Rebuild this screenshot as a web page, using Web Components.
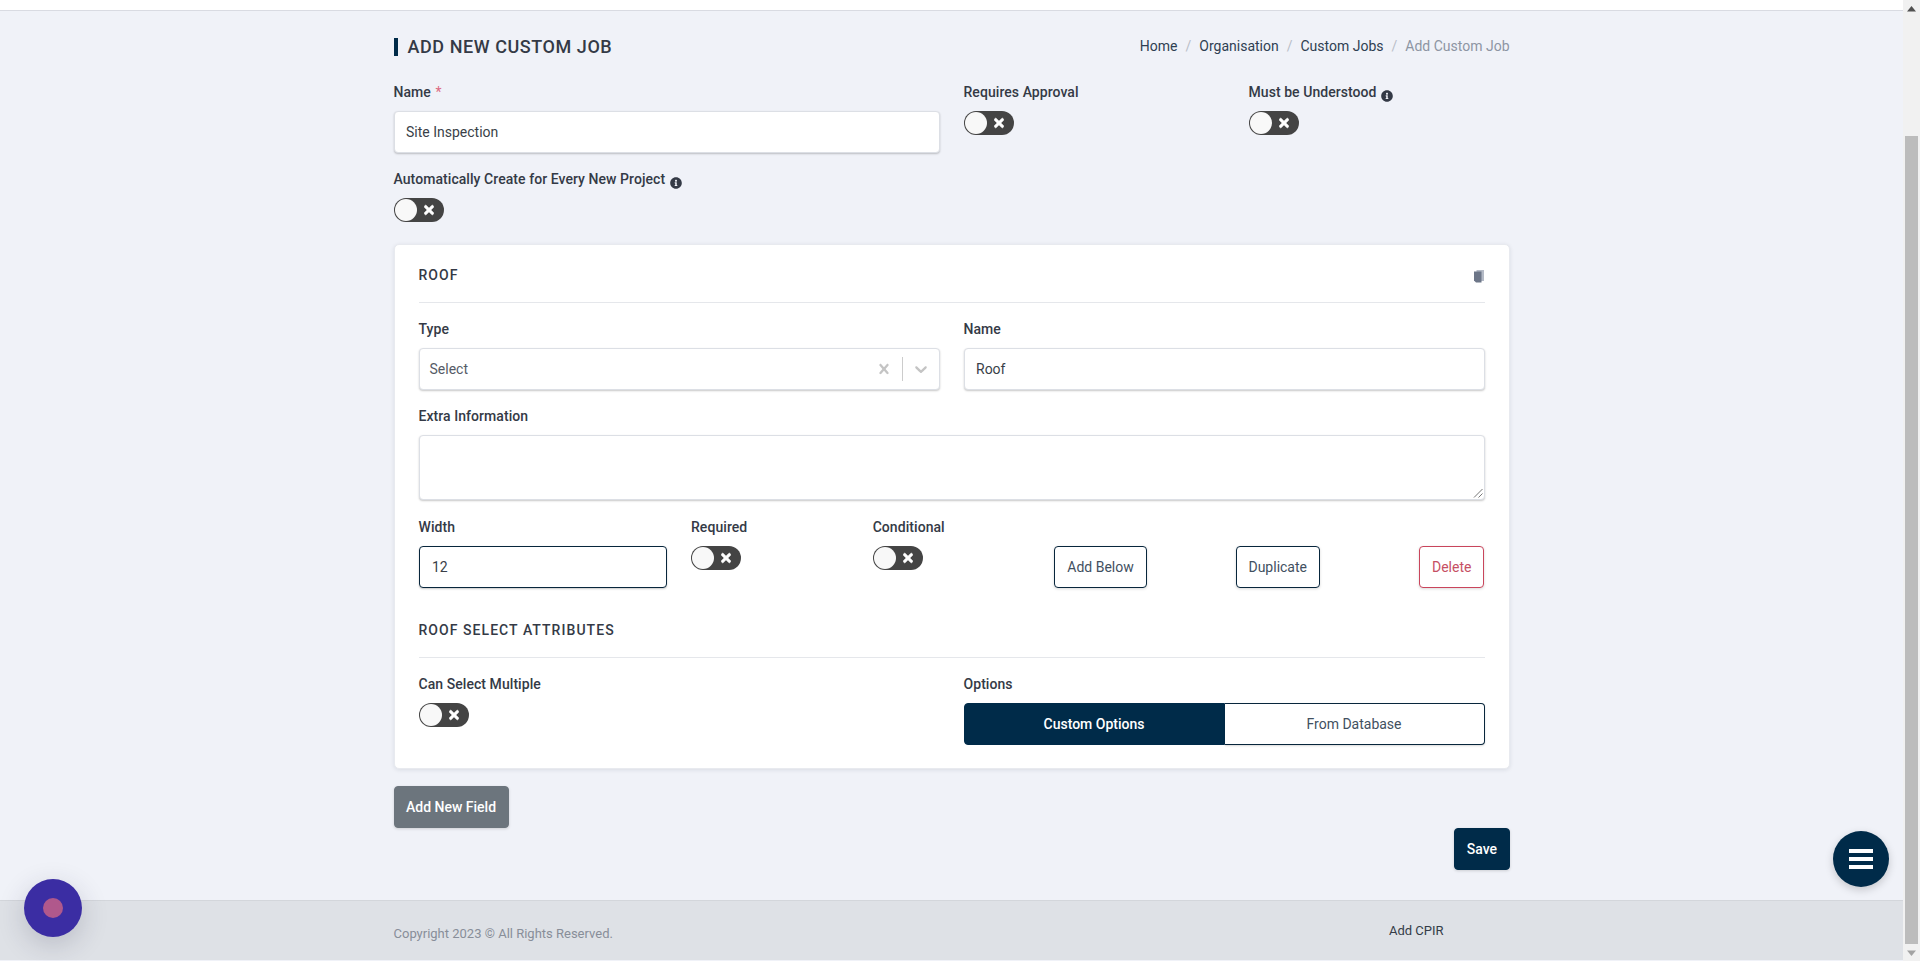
<!DOCTYPE html>
<html lang="en"><head><meta charset="utf-8"><title>Add New Custom Job</title>
<style>
html,body{margin:0;padding:0;height:961px;overflow:hidden;background:#f0f2f8;font-family:Roboto,"Liberation Sans",sans-serif;font-size:14px;color:#343a46}
</style></head><body>
<x-app>
  <x-topbar></x-topbar>
  <x-content>
    <x-page-head heading="ADD NEW CUSTOM JOB">
      <x-crumb href>Home</x-crumb><x-crumb href>Organisation</x-crumb><x-crumb href>Custom Jobs</x-crumb><x-crumb>Add Custom Job</x-crumb>
    </x-page-head>
    <x-row>
      <x-col span="6"><x-field label="Name" required after="15.5"><x-input value="Site Inspection"></x-input></x-field></x-col>
      <x-col span="3"><x-field label="Requires Approval"><x-toggle></x-toggle></x-field></x-col>
      <x-col span="3"><x-field label="Must be Understood" info><x-toggle></x-toggle></x-field></x-col>
      <x-col span="12"><x-field label="Automatically Create for Every New Project" info after="22"><x-toggle></x-toggle></x-field></x-col>
    </x-row>
    <x-card>
      <x-section heading="ROOF" copy></x-section>
      <x-row>
        <x-col span="6"><x-field label="Type" after="15.5"><x-select placeholder="Select"></x-select></x-field></x-col>
        <x-col span="6"><x-field label="Name" after="15.5"><x-input value="Roof"></x-input></x-field></x-col>
        <x-col span="12"><x-field label="Extra Information" gap="8.5" after="16.5"><x-textarea></x-textarea></x-field></x-col>
        <x-col span="3"><x-field label="Width"><x-input value="12" focused pad="12.5"></x-input></x-field></x-col>
        <x-col span="2"><x-field label="Required"><x-toggle></x-toggle></x-field></x-col>
        <x-col span="2"><x-field label="Conditional"><x-toggle></x-toggle></x-field></x-col>
        <x-col span="2"><x-field><x-btn variant="outline">Add Below</x-btn></x-field></x-col>
        <x-col span="2"><x-field><x-btn variant="outline" pad="11.5">Duplicate</x-btn></x-field></x-col>
        <x-col span="1" end><x-field><x-btn variant="danger">Delete</x-btn></x-field></x-col>
      </x-row>
      <x-section heading="ROOF SELECT ATTRIBUTES" before="31.5"></x-section>
      <x-row>
        <x-col span="6"><x-field label="Can Select Multiple"><x-toggle></x-toggle></x-field></x-col>
        <x-col span="6"><x-field label="Options"><x-segmented active="Custom Options" other="From Database"></x-segmented></x-field></x-col>
      </x-row>
    </x-card>
    <x-actions>
      <x-btn variant="grey" pad="11.5">Add New Field</x-btn>
      <x-btn variant="primary" pad="11.5" slot="end">Save</x-btn>
    </x-actions>
  </x-content>
  <x-footer copyright="Copyright 2023 © All Rights Reserved." link="Add CPIR"></x-footer>
  <x-scrollbar></x-scrollbar>
  <x-chat-badge></x-chat-badge>
  <x-fab></x-fab>
</x-app>
<script>
const ICON={
 info:'<svg viewBox="0 0 512 512" width="12" height="12" fill="currentColor"><path d="M256 8C119.043 8 8 119.083 8 256c0 136.997 111.043 248 248 248s248-111.003 248-248C504 119.083 392.957 8 256 8zm0 110c23.196 0 42 18.804 42 42s-18.804 42-42 42-42-18.804-42-42 18.804-42 42-42zm56 254c0 6.627-5.373 12-12 12h-88c-6.627 0-12-5.373-12-12v-24c0-6.627 5.373-12 12-12h12v-64h-12c-6.627 0-12-5.373-12-12v-24c0-6.627 5.373-12 12-12h64c6.627 0 12 5.373 12 12v100h12c6.627 0 12 5.373 12 12v24z"/></svg>',
 times:'<svg viewBox="0 0 352 512" width="10" height="14" fill="currentColor" stroke="currentColor" stroke-width="24"><path d="M242.72 256l100.07-100.07c12.28-12.28 12.28-32.19 0-44.48l-22.24-22.24c-12.28-12.28-32.19-12.28-44.48 0L176 189.28 75.93 89.21c-12.28-12.28-32.19-12.28-44.48 0L9.21 111.45c-12.28 12.28-12.28 32.19 0 44.48L109.28 256 9.21 356.07c-12.28 12.28-12.28 32.19 0 44.48l22.24 22.24c12.28 12.28 32.2 12.28 44.48 0L176 322.72l100.07 100.07c12.28 12.28 32.2 12.28 44.48 0l22.24-22.24c12.28-12.28 12.28-32.19 0-44.48L242.72 256z"/></svg>',
 copy:'<svg viewBox="0 0 10 13" width="10" height="13"><path d="M2.5 0H10v11H2.5z" fill="#b4bac6"/><path d="M0 1.5h7.5V12.5H2L0 10.5z" fill="#6d7688"/></svg>',
 clear:'<svg viewBox="0 0 20 20" width="20" height="20" fill="#c4c4c4"><path d="M14.348 14.849c-0.469 0.469-1.229 0.469-1.697 0l-2.651-3.030-2.651 3.029c-0.469 0.469-1.229 0.469-1.697 0-0.469-0.469-0.469-1.229 0-1.697l2.758-3.15-2.759-3.152c-0.469-0.469-0.469-1.228 0-1.697s1.228-0.469 1.697 0l2.652 3.031 2.651-3.031c0.469-0.469 1.228-0.469 1.697 0s0.469 1.229 0 1.697l-2.758 3.152 2.758 3.15c0.469 0.469 0.469 1.229 0 1.698z"/></svg>',
 chevron:'<svg viewBox="0 0 20 20" width="20" height="20" fill="#c4c4c4"><path d="M4.516 7.548c0.436-0.446 1.043-0.481 1.576 0l3.908 3.747 3.908-3.747c0.533-0.481 1.141-0.446 1.574 0 0.436 0.445 0.408 1.197 0 1.615-0.406 0.418-4.695 4.502-4.695 4.502-0.217 0.223-0.502 0.335-0.787 0.335s-0.57-0.112-0.789-0.335c0 0-4.287-4.084-4.695-4.502s-0.436-1.17 0-1.615z"/></svg>'
};
const NAVY='#08263c';
function el(name,render){
  customElements.define(name,class extends HTMLElement{
    connectedCallback(){
      if(this.shadowRoot)return;
      this.attachShadow({mode:'open'}).innerHTML=render(this);
    }
  });
}
const a=(h,n,d='')=>h.hasAttribute(n)?h.getAttribute(n):d;

el('x-app',()=>`<style>:host{display:block;position:relative;width:1920px;height:961px;overflow:hidden}
.wrap{display:flex;flex-direction:column;width:1903px;height:960px}</style>
<div class="wrap"><slot></slot></div>`);

el('x-topbar',()=>`<style>:host{display:block;flex:none;height:10px;background:#fff;border-bottom:1px solid #d9dbe2}</style>`);

el('x-content',()=>`<style>:host{display:block;flex:1;width:1116px;margin:0 auto;min-height:0}</style><slot></slot>`);

el('x-page-head',h=>`<style>:host{display:flex;justify-content:space-between;align-items:flex-start;height:44.5px;padding-top:26px}
h1{margin:1px 0 0;padding:0 0 0 10px;box-sizing:border-box;border-left:4px solid #002b49;height:18px;display:flex;align-items:center;font:500 18px/18px Roboto,sans-serif;letter-spacing:.56px;color:#343a46}
nav{display:flex;height:19px;align-items:center}</style>
<h1>${a(h,'heading')}</h1><nav><slot></slot></nav>`);

el('x-crumb',h=>`<style>:host{display:inline-flex;font:400 14px/19px Roboto,sans-serif;color:${h.hasAttribute('href')?'#2f3f52':'#8d95a3'}}
.s{color:#b9bec8;padding:0 8px}:host(:first-child) .s{display:none}</style><span class="s">/</span><slot></slot>`);

el('x-row',()=>`<style>:host{display:flex;flex-wrap:wrap;margin:0 -12px}</style><slot></slot>`);

el('x-col',h=>{const s=+a(h,'span','12');return `<style>:host{display:flex;${h.hasAttribute('end')?'justify-content:flex-end;':''}flex:0 0 ${s/12*100}%;width:${s/12*100}%;box-sizing:border-box;padding:0 12px}
</style><slot></slot>`});

el('x-field',h=>{
 const lab=h.getAttribute('label');
 const gap=a(h,'gap','8.5'), after=a(h,'after','0');
 return `<style>:host{display:block;width:100%;margin-bottom:${after}px}
 label{display:block;height:21px;margin-bottom:${gap}px;font:500 14px/21px Roboto,sans-serif;letter-spacing:.06px;color:#343a46;white-space:nowrap}
 .req{color:#dc6a82;font-weight:400;margin-left:1px}
 .i{display:inline-block;vertical-align:-5px;margin-left:4.5px;color:#343a46;line-height:0}
 .box{display:${lab?'block':'flex'};${lab?'':'padding-top:29.5px;'}${h.closest('x-col[end]')?'justify-content:flex-end;':''}}</style>
 ${lab?`<label>${lab}${h.hasAttribute('required')?' <span class="req">*</span>':''}${h.hasAttribute('info')?`<span class="i">${ICON.info}</span>`:''}</label>`:''}
 <div class="box"><slot></slot></div>`});

el('x-input',h=>{const f=h.hasAttribute('focused');return `<style>:host{display:block}
 .i{box-sizing:border-box;height:42px;display:flex;align-items:center;background:#fff;border:1px solid ${f?NAVY:'#dcdfe5'};border-radius:4px;padding:0 ${a(h,'pad','11.5')}px;box-shadow:0 1px 2px rgba(0,0,0,.22);font:400 14px/21px Roboto,sans-serif;color:#3a3f48}</style>
 <div class="i">${a(h,'value')}</div>`});

el('x-textarea',()=>`<style>:host{display:block}
 .i{position:relative;box-sizing:border-box;height:65px;background:#fff;border:1px solid #dcdfe5;border-radius:4px;box-shadow:0 1px 2px rgba(0,0,0,.22)}
 svg{position:absolute;right:1px;bottom:1px}</style>
 <div class="i"><svg width="11" height="11" viewBox="0 0 11 11" stroke="#777" stroke-width="1" fill="none"><path d="M2 10.5 10.5 2M6.5 10.5 10.5 6.5"/></svg></div>`);

el('x-select',h=>`<style>:host{display:block}
 .i{box-sizing:border-box;height:42px;display:flex;align-items:center;background:#fff;border:1px solid #dcdfe5;border-radius:4px;padding-left:10px;box-shadow:0 1px 2px rgba(0,0,0,.22);font:400 14px/21px Roboto,sans-serif;color:#555b66}
 .t{flex:1}.sep{width:1px;height:24px;background:#ccc;margin:0 8px}.ic{display:flex;line-height:0}.v{margin-right:8px}</style>
 <div class="i"><span class="t">${a(h,'placeholder')}</span><span class="ic c">${ICON.clear}</span><span class="sep"></span><span class="ic v">${ICON.chevron}</span></div>`);

el('x-toggle',()=>`<style>:host{display:block;width:50px;height:24px}
 .t{box-sizing:border-box;width:50px;height:24px;border-radius:12px;background:#444;display:flex;align-items:center;padding:0 10px 0 1px;justify-content:space-between}
 .k{width:22px;height:22px;border-radius:50%;background:#f8f8f8}
 .x{color:#fff;line-height:0;display:flex}</style><div class="t"><span class="k"></span><span class="x">${ICON.times}</span></div>`);

el('x-card',()=>`<style>:host{display:block;box-sizing:border-box;height:525px;background:#fff;border:1px solid #e8eaef;border-radius:5px;padding:19.5px 24px 0;box-shadow:0 1px 4px rgba(20,30,50,.1)}</style><slot></slot>`);

el('x-section',h=>`<style>:host{display:block;margin-top:${a(h,'before','0')}px;margin-bottom:15.5px}
 .r{display:flex;justify-content:space-between;align-items:center;height:21px;margin-bottom:16.5px}
 h2{margin:0;font:500 14px/21px Roboto,sans-serif;letter-spacing:1.05px;color:#343a46}
 .ic{line-height:0;padding:2px 1px 0 0;display:flex}
 hr{margin:0;border:0;height:1px;background:#e5e7eb}</style>
 <div class="r"><h2>${a(h,'heading')}</h2>${h.hasAttribute('copy')?`<span class="ic">${ICON.copy}</span>`:''}</div><hr>`);

el('x-btn',h=>{const v=a(h,'variant','outline');
 const S={outline:`background:#fff;color:#42505f;border:1px solid ${NAVY};font-weight:400`,
 danger:'background:#fff;color:#c64f64;border:1px solid #c9455c;font-weight:400',
 grey:'background:#6c757d;color:#fff;border:1px solid #6c757d;font-weight:500',
 primary:'background:#002b49;color:#fff;border:1px solid #002b49;font-weight:500'}[v];
 return `<style>:host{display:inline-block}
 button{box-sizing:border-box;height:42px;padding:0 ${a(h,'pad','12')}px;border-radius:4px;font-family:Roboto,sans-serif;font-size:14px;line-height:21px;${S};box-shadow:0 1px 3px rgba(0,0,0,.15);white-space:nowrap}</style><button><slot></slot></button>`});

el('x-segmented',h=>`<style>:host{display:flex;height:42px}
 .s{flex:1;box-sizing:border-box;display:flex;align-items:center;justify-content:center;font:400 14px/21px Roboto,sans-serif;border:1px solid ${NAVY}}
 .a{background:#002b49;border-color:#002b49;color:#fff;font-weight:500;border-radius:4px 0 0 4px}
 .b{background:#fff;color:#42505f;border-radius:0 4px 4px 0;border-left:0;box-shadow:0 1px 2px rgba(0,0,0,.15)}</style>
 <div class="s a">${a(h,'active')}</div><div class="s b">${a(h,'other')}</div>`);

el('x-actions',()=>`<style>:host{display:block;padding-top:17px}
 .e{display:flex;justify-content:flex-end}.l{display:flex}</style><div class="l"><slot></slot></div><div class="e"><slot name="end"></slot></div>`);

el('x-footer',h=>`<style>:host{display:block;flex:none;box-sizing:border-box;height:60px;background:#dee1e6;border-top:1px solid #d3d6db}
 .c{width:1116px;margin:0 auto;display:flex;justify-content:space-between;padding-right:66px;box-sizing:border-box;font:400 14px/20px Roboto,sans-serif}
 .l{color:#888e99;font-size:13px;padding-top:23px}.r{color:#343c48;font-size:13px;padding-top:20px}</style>
 <div class="c"><span class="l">${a(h,'copyright')}</span><span class="r">${a(h,'link')}</span></div>`);

el('x-scrollbar',()=>`<style>:host{position:absolute;left:1903px;top:0;width:17px;height:961px;background:#f1f1f1;display:flex;flex-direction:column;align-items:center}
 .ar{height:17px;display:flex;align-items:center;justify-content:center;line-height:0;flex:none}
 .sp{flex:1;width:100%;padding:119px 2px 0;box-sizing:border-box;min-height:0}.th{height:100%;background:#bcbcbc}</style>
 <div class="ar"><svg width="9" height="6" viewBox="0 0 9 6"><path d="M4.5 0 9 5.5H0z" fill="#505050"/></svg></div>
 <div class="sp"><div class="th"></div></div>
 <div class="ar"><svg width="9" height="6" viewBox="0 0 9 6"><path d="M0 .5h9L4.5 6z" fill="#a3a3a3"/></svg></div>`);

el('x-chat-badge',()=>`<style>:host{position:absolute;left:24px;top:879px;width:58px;height:58px;border-radius:50%;background:#3b2da3;box-shadow:0 8px 28px rgba(40,40,70,.2);display:flex;align-items:center;justify-content:center}
 i{display:block;width:20px;height:20px;border-radius:50%;background:#b0588c}</style><i></i>`);

el('x-fab',()=>`<style>:host{position:absolute;left:1833px;top:831px;width:56px;height:56px;border-radius:50%;background:#002b49;box-shadow:0 3px 8px rgba(0,0,0,.18);display:flex;flex-direction:column;align-items:center;justify-content:center;gap:4px}
 i{display:block;width:24px;height:4px;background:#fff}</style><i></i><i></i><i></i>`);
</script>
</body></html>
